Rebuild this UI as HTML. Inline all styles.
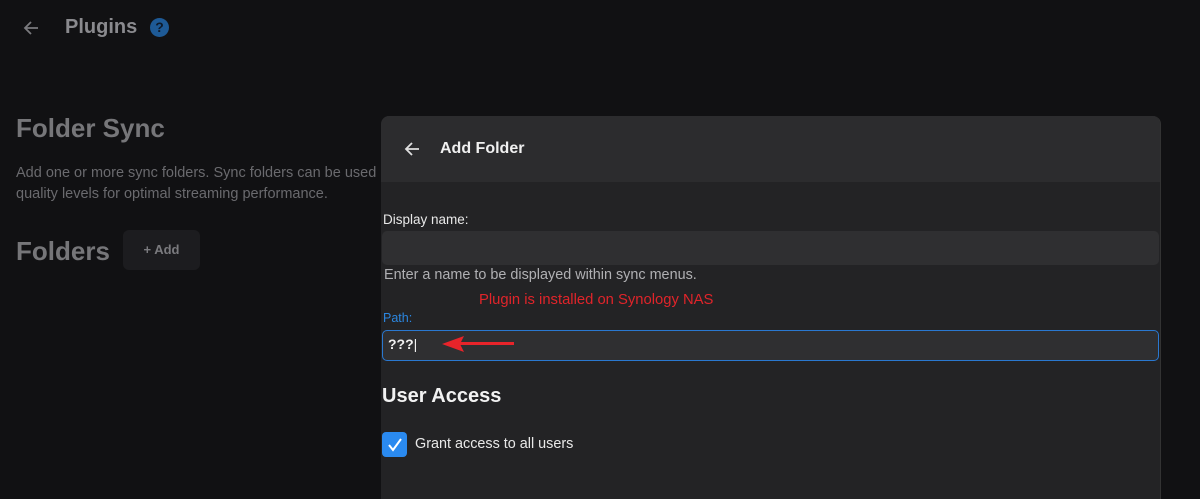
<!DOCTYPE html><html><head><style>
html,body{margin:0;width:1200px;height:499px;overflow:hidden}
body{background:#111113;font-family:"Liberation Sans",sans-serif;position:relative}
.a{position:absolute;white-space:nowrap}
</style></head><body>
<svg class="a" style="left:22px;top:19px" width="18" height="18" viewBox="0 0 18 18"><path d="M16 9H3M9 3L3 9l6 6" stroke="#7a7a7e" stroke-width="1.8" fill="none"/></svg>
<div class="a" style="left:65px;top:16px;font-size:20px;font-weight:bold;color:#8a8a8e">Plugins</div>
<div class="a" style="left:150px;top:18px;width:19px;height:19px;border-radius:50%;background:#1e5a96;color:#0e1a2a;font-weight:bold;font-size:14px;text-align:center;line-height:19px">?</div>
<div class="a" style="left:16px;top:113px;font-size:26px;font-weight:bold;color:#767679">Folder Sync</div>
<div class="a" style="left:16px;top:163px;font-size:14.5px;color:#6a6a6e;line-height:21px">Add one or more sync folders. Sync folders can be used<br>quality levels for optimal streaming performance.</div>
<div class="a" style="left:16px;top:236px;font-size:26px;font-weight:bold;color:#767679">Folders</div>
<div class="a" style="left:123px;top:230px;width:77px;height:40px;border-radius:6px;background:#1c1c1f;color:#7a7a7e;font-size:13px;font-weight:bold;text-align:center;line-height:40px">+ Add</div>
<div class="a" style="left:381px;top:116px;width:779px;height:383px;border-radius:8px 8px 0 0;background:#232325;overflow:hidden;border-right:1px solid #333">
 <div style="height:66px;background:#2c2c2e"></div>
</div>
<svg class="a" style="left:403px;top:140px" width="18" height="18" viewBox="0 0 18 18"><path d="M16 9H3M9 3L3 9l6 6" stroke="#e0e0e0" stroke-width="1.8" fill="none"/></svg>
<div class="a" style="left:440px;top:140px;font-size:16px;font-weight:bold;color:#f0f0f0">Add Folder</div>
<div class="a" style="left:383px;top:212px;font-size:13.5px;color:#e8e8e8">Display name:</div>
<div class="a" style="left:382px;top:231px;width:777px;height:34px;border-radius:5px;background:#2f2f31"></div>
<div class="a" style="left:384px;top:267px;font-size:14.4px;color:#b0b0b3">Enter a name to be displayed within sync menus.</div>
<div class="a" style="left:479px;top:292px;font-size:14.8px;color:#e0242a">Plugin is installed on Synology NAS</div>
<div class="a" style="left:383px;top:311px;font-size:12.5px;color:#2b86e0">Path:</div>
<div class="a" style="left:382px;top:330px;width:775px;height:29px;border-radius:5px;background:#2f2f31;border:1.5px solid #2a78d0"></div>
<div class="a" style="left:388px;top:336px;font-size:14px;font-weight:bold;color:#f0f0f0">???<span style="font-weight:normal">|</span></div>
<svg class="a" style="left:430px;top:333px" width="86" height="22"><path d="M84 10.5H28" stroke="#e8242a" stroke-width="3"/><path d="M12 11L34 3L30 11L34 19Z" fill="#e8242a"/></svg>
<div class="a" style="left:382px;top:385px;font-size:20px;font-weight:bold;color:#f2f2f2">User Access</div>
<div class="a" style="left:382px;top:432px;width:25px;height:25px;border-radius:4px;background:#2a8af0"></div>
<svg class="a" style="left:386px;top:436px" width="18" height="18"><path d="M3 9l4 5 8-11" stroke="#fff" stroke-width="2" fill="none"/></svg>
<div class="a" style="left:415px;top:436px;font-size:14.4px;color:#e8e8e8">Grant access to all users</div>
</body></html>
